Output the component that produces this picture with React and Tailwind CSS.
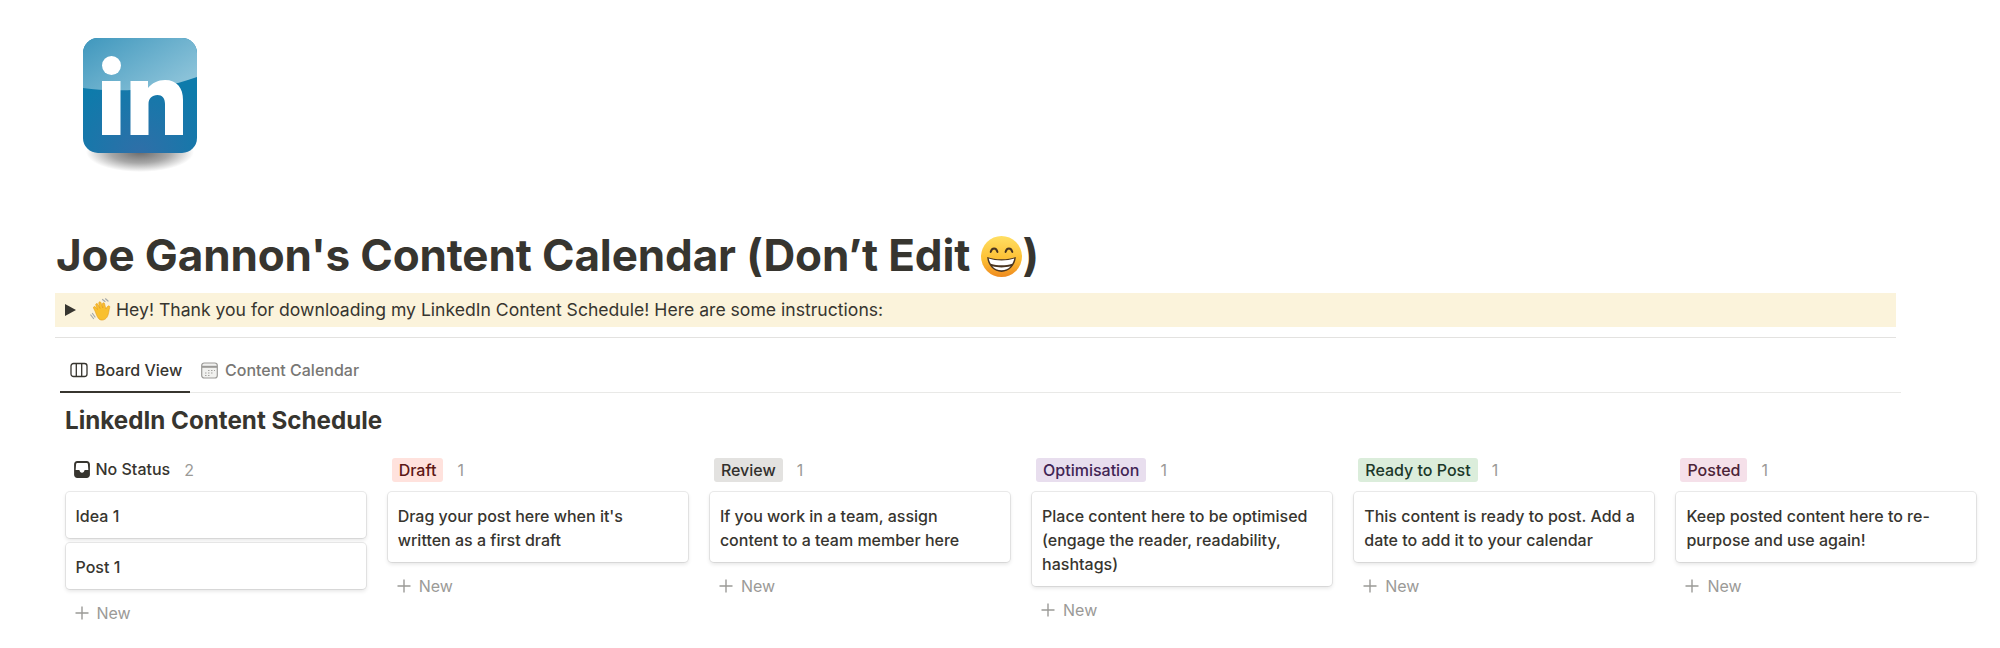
const columns = [
  { name: "No Status", count: 2, cards: ["Idea 1", "Post 1"] },
  { name: "Draft", pill: "bg-[#ffe2dd] text-[#5d1715]", count: 1, cards: ["Drag your post here when it's written as a first draft"] },
  { name: "Review", pill: "bg-[#e3e2e0] text-[#32302c]", count: 1, cards: ["If you work in a team, assign content to a team member here"] },
  { name: "Optimisation", pill: "bg-[#e8deee] text-[#412454]", count: 1, cards: ["Place content here to be optimised (engage the reader, readability, hashtags)"] },
  { name: "Ready to Post", pill: "bg-[#dbeddb] text-[#1c3829]", count: 1, cards: ["This content is ready to post. Add a date to add it to your calendar"] },
  { name: "Posted", pill: "bg-[#f5e0e9] text-[#4c2337]", count: 1, cards: ["Keep posted content here to re-purpose and use again!"] },
];

function LinkedInLogo() {
  return (
    <svg width="130" height="136" viewBox="-8 0 130 136" className="block">
      <defs>
        <linearGradient id="gloss" x1="0" y1="0" x2="1" y2="0.7">
          <stop offset="0" stopColor="#3f97bd" />
          <stop offset="1" stopColor="#8cc3d9" />
        </linearGradient>
        <radialGradient id="base" cx="0.5" cy="1" r="0.7">
          <stop offset="0" stopColor="#2f6fa8" />
          <stop offset="1" stopColor="#0d7bab" />
        </radialGradient>
        <radialGradient id="drop">
          <stop offset="0" stopColor="#6a6a6a" />
          <stop offset="0.55" stopColor="#a8a8a8" />
          <stop offset="1" stopColor="#ffffff" />
        </radialGradient>
        <clipPath id="tile">
          <rect width="114" height="115" rx="15" />
        </clipPath>
      </defs>
      <ellipse cx="57" cy="114" rx="54" ry="20" fill="url(#drop)" />
      <g clipPath="url(#tile)">
        <rect width="114" height="115" fill="url(#base)" />
        <path d="M0 0H114V39C85 50 40 56 0 50Z" fill="url(#gloss)" />
      </g>
      <circle cx="28.5" cy="27.5" r="9.5" fill="#fff" />
      <rect x="19" y="43" width="18.5" height="54" fill="#fff" />
      <path
        d="M47.5 43H65V50C69 45 75 42 82 42C94 42 100 50 100 62V97H82V66C82 60 79 57 74.500 57C69 57 65.500 60.500 65.500 66V97H47.500Z"
        fill="#fff"
      />
    </svg>
  );
}

function GrinEmoji() {
  return (
    <svg width="41" height="41" viewBox="0 0 40 40" className="inline-block align-[-6px] mr-[1px]">
      <defs>
        <linearGradient id="face" x1="0" y1="0" x2="0" y2="1">
          <stop offset="0" stopColor="#ffdf63" />
          <stop offset="0.55" stopColor="#fdc136" />
          <stop offset="1" stopColor="#ef8a1e" />
        </linearGradient>
      </defs>
      <circle cx="20" cy="20" r="20" fill="url(#face)" />
      <path d="M9.500 15.500C10.500 11 15 11 16 15.500" fill="none" stroke="#4a3520" strokeWidth="2" strokeLinecap="round" />
      <path d="M24 15.500C25 11 29.500 11 30.500 15.500" fill="none" stroke="#4a3520" strokeWidth="2" strokeLinecap="round" />
      <path d="M6 20.500C14 23.500 26 23.500 34 20.500C33.500 29 27 35 20 35C13 35 6.500 29 6 20.500Z" fill="#4a3520" />
      <path d="M7.500 22C14.500 24.500 25.500 24.500 32.500 22C32 24 31.500 25.500 30.500 27C24 29 16 29 9.500 27C8.500 25.500 8 24 7.500 22Z" fill="#fff" />
      <path d="M11 29.500C16.500 31 23.500 31 29 29.500C27 32 23.500 33.500 20 33.500C16.500 33.500 13 32 11 29.500Z" fill="#fff" />
    </svg>
  );
}

function WaveEmoji() {
  return (
    <svg width="24" height="24" viewBox="0 0 24 24" className="shrink-0">
      <path d="M12.500 1.500L15 3.500M15.500 0.800L18 3M0.800 17L3.500 20.500M2.500 15.500L5 19" stroke="#a3a9ad" strokeWidth="1.200" fill="none" strokeLinecap="round" />
      <path
        d="M5 13L3.500 10C3 8.800 4.800 8 5.500 9L7.500 11.500L5.800 7C5.300 5.700 7.200 5 7.800 6.200L10 10.500L8.800 5.200C8.500 3.800 10.500 3.300 11 4.700L12.800 10L12.500 6C12.400 4.600 14.300 4.400 14.600 5.800L15.800 11C16.500 9.800 17.200 8.500 18.200 8C19.400 7.500 20 8.500 19.700 9.500C19 11.500 19 14 18 17C17 20.500 14 22.500 11 22C8 21.500 6.500 17 5 13Z"
        fill="#f9c02e"
        stroke="#e39a1b"
        strokeWidth="0.600"
      />
    </svg>
  );
}

function BoardIcon() {
  return (
    <svg width="18" height="18" viewBox="0 0 18 18" fill="none" stroke="#37352f" strokeWidth="1.300">
      <rect x="1" y="2.500" width="16" height="13" rx="2.500" />
      <path d="M6.300 2.500V15.500M11.700 2.500V15.500" />
    </svg>
  );
}

function CalendarIcon() {
  return (
    <svg width="17" height="17" viewBox="0 0 17 17">
      <rect x="0.700" y="1" width="15.600" height="15" rx="2.500" fill="#f1f1ef" stroke="#9b9a97" strokeWidth="1.200" />
      <path d="M1 4.800H16" stroke="#9b9a97" strokeWidth="2" />
      <path d="M7 8.500H8.500M10 8.500H11.500M13 8.500H14M4 11H5.500M7 11H8.500M10 11H11.500M4 13.500H5.500M7 13.500H8.500" stroke="#a5a4a1" strokeWidth="1.100" />
    </svg>
  );
}

function InboxIcon() {
  return (
    <svg width="18" height="19" viewBox="0 0 17 18">
      <path
        d="M4 1H13C14.700 1 16 2.300 16 4V14C16 15.700 14.700 17 13 17H4C2.300 17 1 15.700 1 14V4C1 2.300 2.300 1 4 1ZM4.200 2.800C3.500 2.800 3 3.300 2.900 4L2.500 9.500H6C6.300 11 7.200 12 8.500 12C9.800 12 10.700 11 11 9.500H14.500L14.100 4C14 3.300 13.500 2.800 12.800 2.800Z"
        fill="#37352f"
        fillRule="evenodd"
      />
    </svg>
  );
}

function PlusIcon() {
  return (
    <svg width="14" height="14" viewBox="0 0 14 14" stroke="#9b9a97" strokeWidth="1.400">
      <path d="M7 0.500V13.500M0.500 7H13.500" />
    </svg>
  );
}

function Column({ col }) {
  return (
    <div className="w-[300px] shrink-0">
      <div className="flex items-center h-6 mb-[10px] pl-[4px] text-[16px] font-medium">
        {col.pill ? (
          <span className={`rounded-[3px] px-[7px] h-6 leading-6 whitespace-nowrap ${col.pill}`}>{col.name}</span>
        ) : (
          <span className="flex items-center gap-[5px] pl-[3px] pb-[2px] text-[#37352f]">
            <InboxIcon />
            {col.name}
          </span>
        )}
        <span className="ml-[14px] text-[#9b9a97] font-normal">{col.count}</span>
      </div>
      <div className="flex flex-col gap-[5px]">
        {col.cards.map((text) => (
          <div
            key={text}
            className="bg-white rounded-[4px] px-[10px] pt-[12px] pb-[10px] text-[16px] leading-6 font-medium text-[#37352f] shadow-[0_0_0_1px_rgba(15,15,15,0.08),0_2px_4px_rgba(15,15,15,0.12)]"
          >
            {text}
          </div>
        ))}
      </div>
      <div className="flex items-center gap-[8px] h-6 mt-[12px] pl-[9px] text-[16px] text-[#9b9a97]">
        <PlusIcon />
        New
      </div>
    </div>
  );
}

export default function App() {
  return (
    <div className="w-[2000px] h-[648px] overflow-hidden bg-white font-['Inter',sans-serif] text-[#37352f]">
      <div className="pt-[38px] pl-[75px] h-[230px]">
        <LinkedInLogo />
      </div>

      <h1 className="pl-[56px] text-[44px] leading-[50px] font-bold tracking-[-0.12px] whitespace-nowrap">
        Joe Gannon's Content Calendar (Don’t Edit <GrinEmoji />)
      </h1>

      <div className="mt-[13px] ml-[55px] w-[1841px] h-[34px] bg-[#fbf3db] flex items-center pl-[10px] text-[17.600px]">
        <span className="w-0 h-0 border-y-[6px] border-y-transparent border-l-[11px] border-l-[#37352f] mr-[14px]" />
        <WaveEmoji />
        <span className="ml-[2px]">Hey! Thank you for downloading my LinkedIn Content Schedule! Here are some instructions:</span>
      </div>

      <div className="mt-[10px] ml-[55px] w-[1841px] h-[1px] bg-[#e3e2e0]" />

      <div className="ml-[60px] w-[1841px] h-[55px] border-b border-[#e9e9e7] flex items-end text-[16px] font-medium">
        <div className="flex items-center gap-[7px] h-[42px] w-[130px] pl-[10px] pb-[2px] border-b-2 border-[#37352f] -mb-[1px]">
          <BoardIcon />
          Board View
        </div>
        <div className="flex items-center gap-[7px] h-[42px] pl-[11px] pb-[2px] text-[#787774]">
          <CalendarIcon />
          Content Calendar
        </div>
      </div>

      <h2 className="mt-[12px] ml-[65px] text-[24.200px] leading-8 font-bold">LinkedIn Content Schedule</h2>

      <div className="mt-[21px] ml-[65.500px] flex gap-[22.200px]">
        {columns.map((col) => (
          <Column key={col.name} col={col} />
        ))}
      </div>
    </div>
  );
}
